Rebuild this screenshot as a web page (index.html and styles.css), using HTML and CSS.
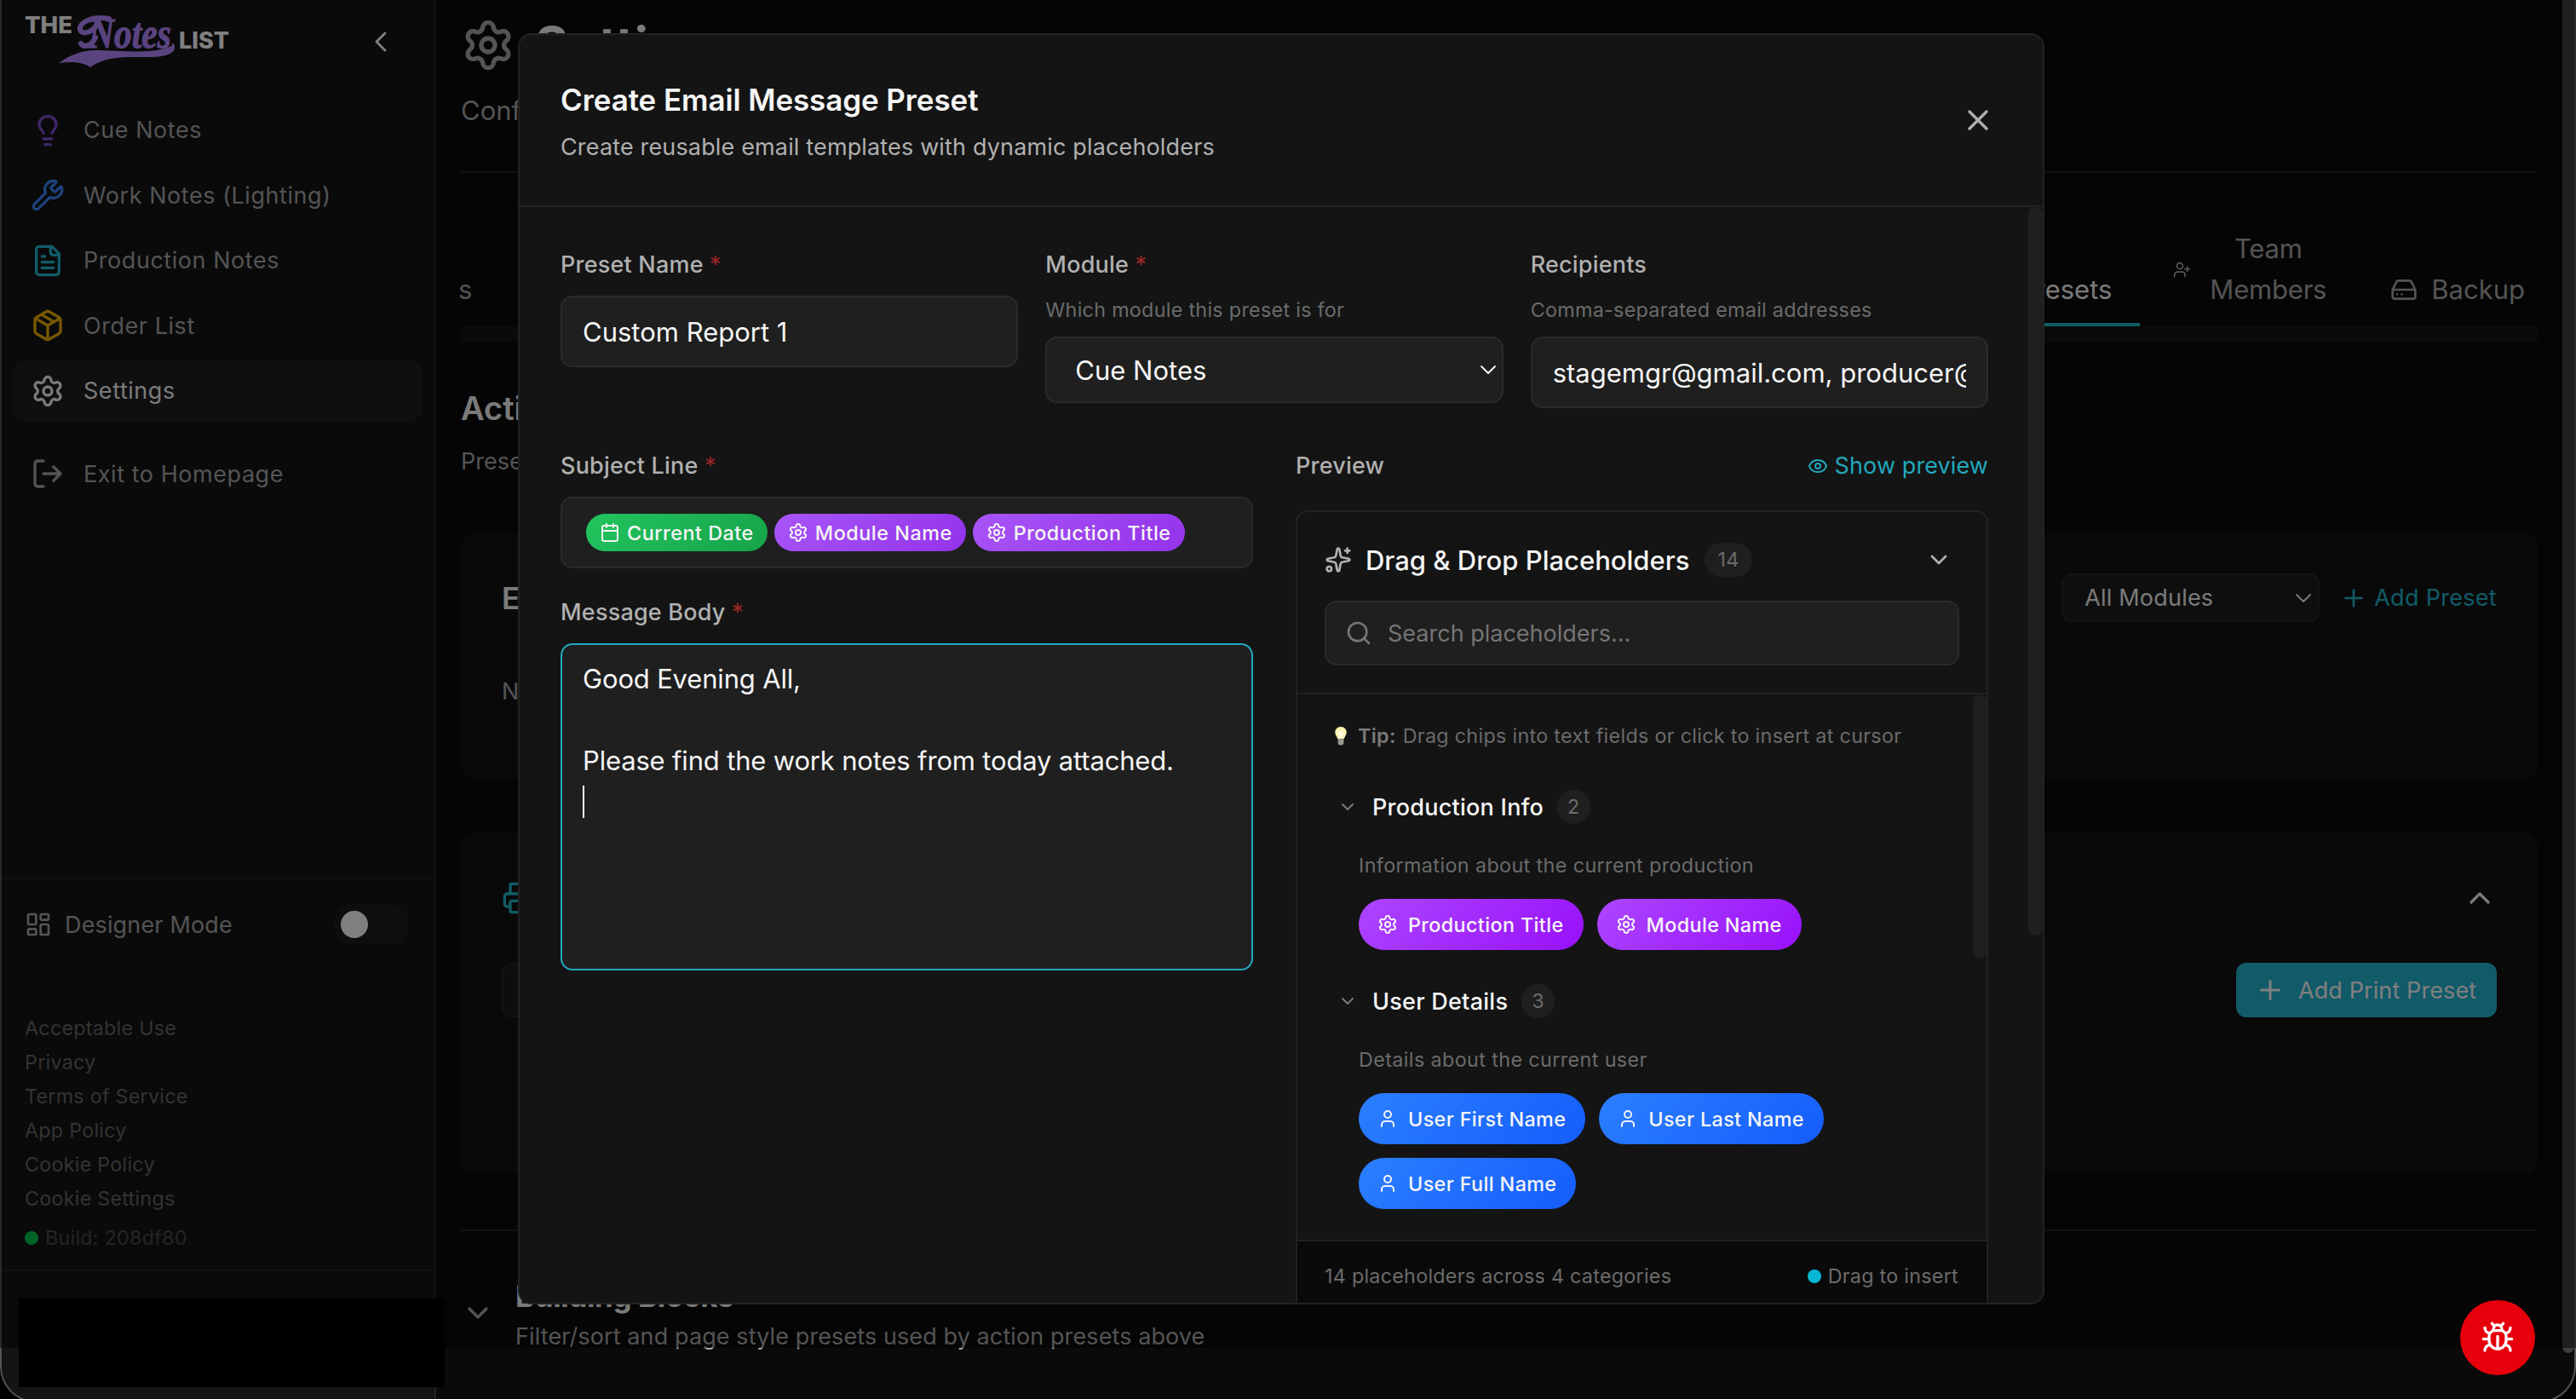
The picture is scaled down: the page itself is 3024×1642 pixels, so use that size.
FILE: index.html
```html
<!DOCTYPE html>
<html lang="en">

<head>
    <meta charset="UTF-8">
    <meta name="viewport" content="width=device-width, initial-scale=1.0">
    <title>The Notes List - Settings</title>
    <link rel="stylesheet" href="styles.css">
</head>

<body>
    <!-- Shared icons -->
    <svg width="0" height="0" class="sprite">
        <symbol id="i-gear" viewBox="0 0 24 24"><path d="M9.671 4.136a2.34 2.34 0 0 1 4.659 0 2.34 2.34 0 0 0 3.319 1.915 2.34 2.34 0 0 1 2.33 4.033 2.34 2.34 0 0 0 0 3.831 2.34 2.34 0 0 1-2.33 4.033 2.34 2.34 0 0 0-3.319 1.915 2.34 2.34 0 0 1-4.659 0 2.34 2.34 0 0 0-3.32-1.915 2.34 2.34 0 0 1-2.33-4.033 2.34 2.34 0 0 0 0-3.831A2.34 2.34 0 0 1 6.35 6.051a2.34 2.34 0 0 0 3.319-1.915"/><circle cx="12" cy="12" r="3"/></symbol>
        <symbol id="i-down" viewBox="0 0 24 24"><path d="m6 9 6 6 6-6"/></symbol>
        <symbol id="i-up" viewBox="0 0 24 24"><path d="m18 15-6-6-6 6"/></symbol>
        <symbol id="i-plus" viewBox="0 0 24 24"><path d="M5 12h14M12 5v14"/></symbol>
        <symbol id="i-user" viewBox="0 0 24 24"><path d="M19 21v-2a4 4 0 0 0-4-4H9a4 4 0 0 0-4 4v2"/><circle cx="12" cy="7" r="4"/></symbol>
    </svg>

    <div class="window">
        <aside class="sidebar">
            <div class="sidebar-head">
                <svg class="logo" viewBox="0 0 250 70">
                    <text x="1" y="28.7" class="logo-word" textLength="56" lengthAdjust="spacingAndGlyphs">THE</text>
                    <text x="182" y="46.7" class="logo-word" textLength="59" lengthAdjust="spacingAndGlyphs">LIST</text>
                    <text x="76" y="45.5" class="logo-script" textLength="97" lengthAdjust="spacingAndGlyphs">Notes</text>
                    <path d="M100 12C80 8 64 17 66 25c2 6 13 4 19-5" class="logo-curl"/>
                    <path d="M84 34c-4 9-13 13-17 7" class="logo-curl"/>
                    <path d="M41 64C54 55 66 49 86 49c26 0 58 5 82-3 6-2 7-3 6-6 5 3 4 9-1 12-9 6-26 5-46 5-20 0-35 2-49 12-8-6-21-7-37-5z" class="logo-swoosh"/>
                </svg>
                <svg class="icon collapse" viewBox="0 0 24 24"><path d="m15 18-6-6 6-6"/></svg>
            </div>
            <nav class="nav">
                <a class="nav-item"><svg class="icon c-purple" viewBox="0 0 24 24"><path d="M15 14c.2-1 .7-1.7 1.5-2.5 1-.9 1.5-2.2 1.5-3.5A6 6 0 0 0 6 8c0 1 .2 2.2 1.5 3.5.7.7 1.3 1.5 1.5 2.5M9 18h6M10 22h4"/></svg>Cue Notes</a>
                <a class="nav-item"><svg class="icon c-blue" viewBox="0 0 24 24"><path d="M14.7 6.3a1 1 0 0 0 0 1.4l1.6 1.6a1 1 0 0 0 1.4 0l3.106-3.105c.32-.322.863-.22.983.218a6 6 0 0 1-8.259 7.057l-7.91 7.91a1 1 0 0 1-2.999-3l7.91-7.91a6 6 0 0 1 7.057-8.259c.438.12.54.662.219.984z"/></svg>Work Notes (Lighting)</a>
                <a class="nav-item"><svg class="icon c-cyan" viewBox="0 0 24 24"><path d="M15 2H6a2 2 0 0 0-2 2v16a2 2 0 0 0 2 2h12a2 2 0 0 0 2-2V7ZM14 2v4a2 2 0 0 0 2 2h4M10 9H8M16 13H8M16 17H8"/></svg>Production Notes</a>
                <a class="nav-item"><svg class="icon c-yellow" viewBox="0 0 24 24"><path d="M11 21.73a2 2 0 0 0 2 0l7-4A2 2 0 0 0 21 16V8a2 2 0 0 0-1-1.73l-7-4a2 2 0 0 0-2 0l-7 4A2 2 0 0 0 3 8v8a2 2 0 0 0 1 1.73zM12 22V12M3.3 7 12 12l8.700-5M7.5 4.270l9 5.150"/></svg>Order List</a>
                <a class="nav-item active"><svg class="icon"><use href="#i-gear"/></svg>Settings</a>
                <div class="nav-divider"></div>
                <a class="nav-item"><svg class="icon" viewBox="0 0 24 24"><path d="M9 21H5a2 2 0 0 1-2-2V5a2 2 0 0 1 2-2h4M16 17l5-5-5-5M21 12H9"/></svg>Exit to Homepage</a>
            </nav>
            <div class="designer">
                <svg class="icon icon-32" viewBox="0 0 24 24"><rect width="7" height="9" x="3" y="3" rx="1"/><rect width="7" height="5" x="14" y="3" rx="1"/><rect width="7" height="9" x="14" y="12" rx="1"/><rect width="7" height="5" x="3" y="16" rx="1"/></svg>
                <span>Designer Mode</span>
                <span class="toggle"><i></i></span>
            </div>
            <div class="links">
                <a>Acceptable Use</a>
                <a>Privacy</a>
                <a>Terms of Service</a>
                <a>App Policy</a>
                <a>Cookie Policy</a>
                <a>Cookie Settings</a>
                <div class="build"><i></i>Build: 208df80</div>
            </div>
            <div class="account"></div>
        </aside>

        <main class="main">
            <div class="page-title"><svg class="icon icon-64"><use href="#i-gear"/></svg><h1>Settings</h1></div>
            <p class="page-sub">Configure</p>
            <div class="tabs">
                <div class="tab tab-first">s</div>
                <div class="tab tab-active">Presets</div>
                <div class="tab tab-team">
                    <svg class="icon icon-21" viewBox="0 0 24 24"><path d="M16 21v-2a4 4 0 0 0-4-4H6a4 4 0 0 0-4 4v2M19 8v6M22 11h-6"/><circle cx="9" cy="7" r="4"/></svg>
                    <span>Team<br>Members</span>
                </div>
                <div class="tab tab-backup">
                    <svg class="icon icon-32" viewBox="0 0 24 24"><path d="M22 12H2M5.450 5.110 2 12v6a2 2 0 0 0 2 2h16a2 2 0 0 0 2-2v-6l-3.450-6.890A2 2 0 0 0 16.760 4H7.240a2 2 0 0 0-1.790 1.110zM6 16h.01M10 16h.01"/></svg>
                    Backup
                </div>
            </div>
            <div class="tabs-scroll"></div>

            <h2 class="section-title">Action Presets</h2>
            <p class="section-sub">Presets</p>

            <section class="card card-email">
                <div class="card-row">
                    <h3>Email</h3>
                    <div class="module-select">All Modules <svg class="icon icon-32 thin"><use href="#i-down"/></svg></div>
                    <a class="add-link"><svg class="icon icon-32"><use href="#i-plus"/></svg>Add Preset</a>
                </div>
                <p>No presets</p>
            </section>

            <section class="card card-print">
                <div class="card-row">
                    <svg class="icon c-cyan" viewBox="0 0 24 24"><path d="M6 18H4a2 2 0 0 1-2-2v-5a2 2 0 0 1 2-2h16a2 2 0 0 1 2 2v5a2 2 0 0 1-2 2h-2M6 9V3a1 1 0 0 1 1-1h10a1 1 0 0 1 1 1v6"/><rect x="6" y="14" width="12" height="8" rx="1"/></svg>
                    <svg class="icon fold"><use href="#i-up"/></svg>
                </div>
                <div class="card-row">
                    <div class="filter-box"></div>
                    <button class="btn"><svg class="icon icon-36"><use href="#i-plus"/></svg>Add Print Preset</button>
                </div>
            </section>

            <section class="blocks">
                <svg class="icon"><use href="#i-down"/></svg>
                <div>
                    <h3>Building Blocks</h3>
                    <p>Filter/sort and page style presets used by action presets above</p>
                </div>
            </section>
        </main>
        <div class="page-scroll"></div>
    </div>

    <div class="overlay"></div>
    <div class="redacted"></div>

    <div class="modal">
        <div class="modal-head">
            <div>
                <h2>Create Email Message Preset</h2>
                <p>Create reusable email templates with dynamic placeholders</p>
            </div>
            <svg class="icon" viewBox="0 0 24 24"><path d="M18 6 6 18M6 6l12 12"/></svg>
        </div>
        <div class="modal-body">
            <div class="fields">
                <div>
                    <div class="label">Preset Name <b>*</b></div>
                    <div class="input">Custom Report 1</div>
                </div>
                <div>
                    <div class="label">Module <b>*</b></div>
                    <div class="help">Which module this preset is for</div>
                    <div class="input select">Cue Notes <svg class="icon icon-32 thin"><use href="#i-down"/></svg></div>
                </div>
                <div>
                    <div class="label">Recipients</div>
                    <div class="help">Comma-separated email addresses</div>
                    <div class="input"><span class="clip">stagemgr@gmail.com, producer@</span></div>
                </div>
            </div>
            <div class="columns">
                <div>
                    <div class="label">Subject Line <b>*</b></div>
                    <div class="input subject">
                        <span class="tag green"><svg class="icon" viewBox="0 0 24 24"><path d="M8 2v4M16 2v4M3 10h18"/><rect width="18" height="18" x="3" y="4" rx="2"/></svg>Current Date</span>
                        <span class="tag purple"><svg class="icon"><use href="#i-gear"/></svg>Module Name</span>
                        <span class="tag purple"><svg class="icon"><use href="#i-gear"/></svg>Production Title</span>
                    </div>
                    <div class="label label-body">Message Body <b>*</b></div>
                    <div class="textarea">Good Evening All,<br><br>Please find the work notes from today attached.<br><i class="caret"></i></div>
                </div>
                <div>
                    <div class="label preview-label">Preview
                        <a><svg class="icon icon-24" viewBox="0 0 24 24"><path d="M2.062 12.348a1 1 0 0 1 0-.696 10.750 10.750 0 0 1 19.876 0 1 1 0 0 1 0 .696 10.750 10.750 0 0 1-19.876 0"/><circle cx="12" cy="12" r="3"/></svg>Show preview</a>
                    </div>
                    <div class="panel">
                        <div class="panel-head">
                            <div class="panel-title">
                                <svg class="icon icon-32" viewBox="0 0 24 24"><path d="M11.017 2.814a1 1 0 0 1 1.966 0l1.051 5.558a2 2 0 0 0 1.594 1.594l5.558 1.051a1 1 0 0 1 0 1.966l-5.558 1.051a2 2 0 0 0-1.594 1.594l-1.051 5.558a1 1 0 0 1-1.966 0l-1.051-5.558a2 2 0 0 0-1.594-1.594l-5.558-1.051a1 1 0 0 1 0-1.966l5.558-1.051a2 2 0 0 0 1.594-1.594zM20 2v4M22 4h-4"/><circle cx="4" cy="20" r="2"/></svg>
                                <h3>Drag &amp; Drop Placeholders</h3>
                                <span class="count">14</span>
                                <svg class="icon icon-32 toggle-arrow"><use href="#i-down"/></svg>
                            </div>
                            <div class="search">
                                <svg class="icon icon-32" viewBox="0 0 24 24"><circle cx="11" cy="11" r="8"/><path d="m21 21-4.340-4.340"/></svg>
                                Search placeholders...
                            </div>
                        </div>
                        <div class="panel-list">
                            <div class="list-scroll"></div>
                            <div class="tip">
                                <svg class="bulb" viewBox="0 0 16 24"><path d="M8 1C3.800 1 1 4 1 8c0 3 2.400 4.500 3 8h8c.6-3.500 3-5 3-8 0-4-2.800-7-7-7z" fill="#fdf0b0"/><path d="M5 7.500C6 6 10 6 11 7.500L9.500 15h-3z" fill="#fffbe6"/><path d="M4.500 16h7v5c0 1.500-1.500 2.500-3.500 2.500S4.500 22.500 4.500 21z" fill="#9a9a94"/></svg>
                                <b>Tip:</b> Drag chips into text fields or click to insert at cursor
                            </div>
                            <div class="group-title"><svg class="icon icon-24"><use href="#i-down"/></svg>Production Info<span class="count">2</span></div>
                            <p>Information about the current production</p>
                            <div class="chips">
                                <span class="chip purple"><svg class="icon icon-24"><use href="#i-gear"/></svg>Production Title</span>
                                <span class="chip purple"><svg class="icon icon-24"><use href="#i-gear"/></svg>Module Name</span>
                            </div>
                            <div class="group-title"><svg class="icon icon-24"><use href="#i-down"/></svg>User Details<span class="count">3</span></div>
                            <p>Details about the current user</p>
                            <div class="chips">
                                <span class="chip blue"><svg class="icon icon-24"><use href="#i-user"/></svg>User First Name</span>
                                <span class="chip blue"><svg class="icon icon-24"><use href="#i-user"/></svg>User Last Name</span>
                                <span class="chip blue"><svg class="icon icon-24"><use href="#i-user"/></svg>User Full Name</span>
                            </div>
                        </div>
                        <div class="panel-foot">
                            <span>14 placeholders across 4 categories</span>
                            <span class="drag"><i></i>Drag to insert</span>
                        </div>
                    </div>
                </div>
            </div>
        </div>
        <div class="modal-scroll"></div>
    </div>

    <button class="bug">
        <svg class="icon" viewBox="0 0 24 24"><path d="M12 20v-9M14 7a4 4 0 0 1 4 4v3a6 6 0 0 1-12 0v-3a4 4 0 0 1 4-4zM14.120 3.880 16 2M21 21a4 4 0 0 0-3.810-4M21 5a4 4 0 0 1-3.550 3.970M22 13h-4M3 21a4 4 0 0 1 3.810-4M3 5a4 4 0 0 0 3.550 3.970M6 13H2M8 2l1.880 1.880M9 7.130V6a3 3 0 1 1 6 0v1.130"/></svg>
    </button>
</body>

</html>
```
FILE: styles.css
```css
* {
    box-sizing: border-box;
    margin: 0;
    padding: 0;
}

html {
    height: 1642px;
    overflow: hidden;
    background: #000;
}

body {
    position: relative;
    width: 3024px;
    height: 1642px;
    overflow: hidden;
    background: #000;
    color: #f5f5f5;
    font-family: Inter, "Liberation Sans", sans-serif;
    font-size: 27px;
}

h1, h2, h3 {
    font-weight: 600;
}

.sprite {
    position: absolute;
}

.icon {
    width: 40px;
    height: 40px;
    flex: none;
    fill: none;
    stroke: currentColor;
    stroke-width: 2;
    stroke-linecap: round;
    stroke-linejoin: round;
}

.icon-64 { width: 64px; height: 64px; }
.icon-36 { width: 36px; height: 36px; }
.icon-32 { width: 32px; height: 32px; }
.icon-24 { width: 24px; height: 24px; }
.icon-21 { width: 21px; height: 21px; }
.thin { stroke-width: 1.5; }

.c-purple { color: #7c4fd0; }
.c-blue { color: #3b82f6; }
.c-cyan { color: #22b8cf; }
.c-yellow { color: #f0b100; }

/* App window */
.window {
    display: flex;
    width: 3024px;
    height: 1646px;
    border: 2px solid #555;
    border-top: none;
    border-radius: 0 0 42px 42px;
    background: #0a0a0a;
    overflow: hidden;
}

.sidebar {
    display: flex;
    flex-direction: column;
    width: 510px;
    flex: none;
    background: #141414;
    border-right: 2px solid #242424;
    color: #a8a8a8;
    letter-spacing: 0.550px;
}

.sidebar-head {
    display: flex;
    align-items: center;
    justify-content: space-between;
    height: 98px;
    padding: 0 43px 0 26px;
}

.logo {
    width: 250px;
    height: 70px;
    margin-bottom: 8px;
}

.logo-word {
    fill: #fff;
    font-size: 26.500px;
    font-weight: 800;
    letter-spacing: 0;
}

.logo-script {
    fill: #b488ff;
    stroke: #b488ff;
    stroke-width: 1;
    font-family: "Liberation Serif", serif;
    font-size: 50px;
    font-style: italic;
    font-weight: 700;
    letter-spacing: 0;
}

.logo-swoosh {
    fill: #b488ff;
}

.logo-curl {
    fill: none;
    stroke: #b488ff;
    stroke-width: 6;
    stroke-linecap: round;
}

.collapse {
    color: #fff;
    stroke-width: 1.700;
}

.nav {
    display: flex;
    flex-direction: column;
    gap: 4.600px;
    height: 932px;
    padding: 18.500px 14px 0 12px;
}

.nav-item {
    display: flex;
    align-items: center;
    gap: 22px;
    height: 72px;
    flex: none;
    padding-left: 22px;
    border-radius: 16px;
}

.nav-item.active {
    background: #1f1f1f;
    color: #f5f5f5;
}

.nav-divider {
    height: 2px;
    margin: 12px 0 2px;
    background: #1a1a1a;
}

.designer {
    display: flex;
    align-items: center;
    gap: 15px;
    height: 108px;
    border-top: 2px solid #222;
    padding: 0 30px 0 27px;
    letter-spacing: 0.150px;
}

.toggle {
    width: 88px;
    height: 48px;
    margin-left: auto;
    padding: 8px;
    border-radius: 24px;
    background: #1d1d1d;
}

.toggle i {
    display: block;
    width: 32px;
    height: 32px;
    border-radius: 50%;
    background: #fff;
}

.links {
    height: 352px;
    padding: 49px 0 0 27px;
    color: #666;
    font-size: 23.300px;
    letter-spacing: 0.250px;
    line-height: 40px;
}

.links a {
    display: block;
}

.build {
    display: flex;
    align-items: center;
    gap: 8px;
    margin-top: 6px;
    color: #4a4a4a;
}

.build i {
    width: 16px;
    height: 16px;
    border-radius: 50%;
    background: #00c950;
}

.account {
    flex: 1;
    border-top: 2px solid #222;
}

/* Settings page behind the dialog */
.main {
    display: flex;
    flex-direction: column;
    width: 2496px;
    flex: none;
    padding: 21px 29px 0 29px;
    color: #a8a8a8;
}

.page-title {
    display: flex;
    align-items: center;
    gap: 23px;
    height: 64px;
}

.page-title h1 {
    color: #f5f5f5;
    font-size: 60px;
    font-weight: 700;
}

.page-sub {
    height: 118px;
    padding-top: 21px;
    border-bottom: 2px solid #222;
    font-size: 31px;
    line-height: 48px;
}

.tabs {
    display: flex;
    align-items: flex-end;
    height: 180px;
    font-size: 31px;
    line-height: 48px;
}

.tab {
    display: flex;
    align-items: center;
    padding-bottom: 19px;
}

.tab-first {
    margin-left: -3px;
    margin-right: auto;
}

.tab-active {
    padding: 0 33px 15px;
    border-bottom: 4px solid #22b8cf;
    color: #f5f5f5;
}

.tab-team {
    gap: 22px;
    margin-left: 39px;
    text-align: center;
    letter-spacing: -0.200px;
}

.tab-backup {
    gap: 16px;
    margin: 0 15px 0 75px;
}

.tabs-scroll {
    height: 18px;
    background: #151515;
}

.section-title {
    height: 47px;
    margin-top: 55px;
    color: #f5f5f5;
    font-size: 38px;
    line-height: 47px;
}

.section-sub {
    height: 40px;
    margin-top: 18px;
    line-height: 42px;
}

.card {
    padding: 0 48px;
    border-radius: 16px;
    background: #131313;
}

.card-row {
    display: flex;
    align-items: center;
}

.card h3 {
    margin-right: auto;
    color: #f5f5f5;
    font-size: 35px;
}

.card-email {
    height: 288px;
    margin-top: 65px;
    padding-top: 47px;
}

.card-email p {
    margin-top: 65px;
}

.module-select {
    display: flex;
    align-items: center;
    justify-content: space-between;
    width: 303px;
    height: 57px;
    margin-right: 24px;
    padding: 0 1px 0 25px;
    border: 2px solid #262626;
    border-radius: 12px;
    background: #1d1d1d;
    color: #f5f5f5;
    letter-spacing: 0.200px;
}

.module-select .icon {
    width: 32px;
}

.add-link {
    display: flex;
    align-items: center;
    gap: 8px;
    color: #22b8cf;
    letter-spacing: 0.300px;
}

.card-print {
    height: 401px;
    margin-top: 63px;
    padding-top: 57px;
}

.fold {
    margin-left: auto;
    color: #f5f5f5;
}

.card-print .card-row + .card-row {
    justify-content: space-between;
    margin-top: 56px;
}

.filter-box {
    width: 300px;
    height: 64px;
    border: 2px solid #262626;
    border-radius: 12px;
    background: #1a1a1a;
}

.btn {
    display: flex;
    align-items: center;
    gap: 15px;
    width: 306px;
    height: 64px;
    padding-left: 22px;
    border: none;
    border-radius: 12px;
    background: #22b4d0;
    color: #fff;
    font: 27px Inter, sans-serif;
    letter-spacing: 0.100px;
}

.blocks {
    display: flex;
    gap: 24px;
    margin-top: 65px;
    padding-top: 52px;
    border-top: 2px solid #222;
}

.blocks .icon {
    margin-top: 24px;
}

.blocks h3 {
    color: #f5f5f5;
    font-size: 35px;
    font-weight: 700;
    line-height: 48px;
    letter-spacing: -0.400px;
}

.blocks p {
    line-height: 48px;
    letter-spacing: 0.100px;
}

.page-scroll {
    width: 14px;
    height: 1588px;
    background: #3e3e3e;
    border-radius: 0 0 8px 8px;
}

.overlay {
    position: absolute;
    top: 0;
    left: 0;
    width: 3024px;
    height: 1582px;
    background: rgba(0, 0, 0, 0.5);
}

.redacted {
    position: absolute;
    top: 1524px;
    left: 22px;
    width: 500px;
    height: 104px;
    background: #000;
}

/* Dialog */
.modal {
    position: absolute;
    top: 39px;
    left: 608px;
    width: 1792px;
    height: 1492px;
    border: 2px solid #222;
    border-radius: 16px;
    background: #141414;
    overflow: hidden;
}

.modal-head {
    display: flex;
    align-items: center;
    justify-content: space-between;
    height: 202px;
    padding: 0 56px 0 48px;
    border-bottom: 2px solid #222;
    color: #b0b0b0;
}

.modal-head h2 {
    margin-top: 8px;
    color: #f5f5f5;
    font-size: 35px;
    line-height: 56px;
    letter-spacing: -0.100px;
}

.modal-head p {
    line-height: 56px;
    letter-spacing: 0.150px;
}

.modal-body {
    width: 1772px;
    padding: 48px 48px 0;
}

.modal-scroll {
    position: absolute;
    top: 202px;
    right: 0;
    width: 17px;
    height: 855px;
    border-radius: 8px;
    background: #1f1f1f;
}

.fields {
    display: grid;
    grid-template-columns: repeat(3, minmax(0, 1fr));
    gap: 32px;
    height: 188px;
    margin-bottom: 48px;
}

.columns {
    display: grid;
    grid-template-columns: 813px 813px;
    justify-content: space-between;
}

.label {
    height: 40px;
    margin-bottom: 16px;
    color: #b0b0b0;
    font-weight: 500;
    line-height: 40px;
    letter-spacing: 0.200px;
}

.label b {
    color: #9b2626;
    font-weight: 400;
}

.help {
    height: 34px;
    margin-bottom: 14px;
    color: #6b6b6b;
    font-size: 23.300px;
    line-height: 34px;
    letter-spacing: 0.300px;
}

.input {
    display: flex;
    align-items: center;
    height: 84px;
    padding: 0 24px;
    border: 2px solid #2a2a2a;
    border-radius: 14px;
    background: #1f1f1f;
    font-size: 31px;
    white-space: nowrap;
}

.clip {
    overflow: hidden;
}

.select {
    justify-content: space-between;
    height: 78px;
    padding: 0 0 0 33px;
}

.subject {
    gap: 8px;
    padding-left: 28px;
}

.tag {
    display: flex;
    align-items: center;
    gap: 8px;
    height: 44px;
    padding: 0 16px;
    border-radius: 22px;
    font-size: 23.300px;
    font-weight: 500;
    letter-spacing: 0.550px;
}

.tag .icon {
    width: 24px;
    height: 24px;
}

.tag.green { background: linear-gradient(135deg, #22c55e, #16a34a); }
.tag.purple { background: linear-gradient(135deg, #a855f7, #9333ea); }

.label-body {
    margin: 32px 0 16px;
}

.textarea {
    height: 384px;
    padding: 16px 24px;
    border: 2px solid #22a8bd;
    border-radius: 14px;
    background: #1f1f1f;
    font-size: 31px;
    line-height: 48px;
    letter-spacing: -0.170px;
}

.caret {
    display: block;
    width: 2px;
    height: 38px;
    margin-top: 5px;
    background: #fff;
}

.preview-label {
    display: flex;
    justify-content: space-between;
    margin-bottom: 32px;
}

.preview-label a {
    display: flex;
    align-items: center;
    gap: 8px;
    color: #22a8bd;
    font-weight: 400;
    letter-spacing: 0.100px;
}

.panel {
    height: 960px;
    border: 2px solid #222;
    border-radius: 14px;
}

.panel-head {
    height: 214px;
    padding: 36px 32px 0;
    border-bottom: 2px solid #222;
}

.panel-title {
    display: flex;
    align-items: center;
    height: 40px;
    color: #b0b0b0;
}

.panel-title h3 {
    margin: 0 18px 0 16px;
    color: #f5f5f5;
    font-size: 31px;
    font-weight: 500;
}

.toggle-arrow {
    margin: 0 8px 0 auto;
}

.count {
    height: 40px;
    padding: 0 12px;
    border-radius: 20px;
    background: #1f1f1f;
    color: #6b6b6b;
    font-size: 23.300px;
    font-weight: 400;
    line-height: 40px;
    letter-spacing: 0.300px;
}

.panel-title .count {
    padding: 0 15px;
}

.search {
    display: flex;
    align-items: center;
    gap: 18px;
    height: 76px;
    margin-top: 28px;
    padding-left: 22px;
    border: 2px solid #2a2a2a;
    border-radius: 14px;
    background: #1f1f1f;
    color: #757575;
}

.panel-list {
    position: relative;
    height: 640px;
    padding: 27px 0 0 40px;
}

.list-scroll {
    position: absolute;
    top: 0;
    right: 0;
    width: 16px;
    height: 310px;
    border-radius: 8px;
    background: #1f1f1f;
}

.tip {
    display: flex;
    align-items: center;
    gap: 8px;
    height: 42px;
    color: #6b6b6b;
    font-size: 23.300px;
    letter-spacing: 0.310px;
}

.tip b {
    color: #7a7a7a;
    font-weight: 600;
}

.bulb {
    width: 16px;
    height: 23px;
    margin: 0 4px 0 3px;
}

.group-title {
    display: flex;
    align-items: center;
    height: 40px;
    margin-top: 43px;
    padding-left: 7px;
    font-weight: 500;
    letter-spacing: 0.250px;
}

.chips + .group-title {
    margin-top: 40px;
}

.group-title .icon {
    margin-right: 17px;
    color: #7a7a7a;
}

.group-title .count {
    margin-left: 16px;
}

.panel-list p {
    height: 40px;
    margin: 29px 0 19px 32px;
    color: #6b6b6b;
    font-size: 23.300px;
    line-height: 40px;
    letter-spacing: 0.400px;
}

.chips {
    display: flex;
    flex-wrap: wrap;
    gap: 16px;
    width: 620px;
    margin-left: 32px;
}

.chip {
    display: flex;
    align-items: center;
    gap: 12px;
    height: 60px;
    padding: 0 23px 0 22px;
    border-radius: 30px;
    font-size: 23.300px;
    font-weight: 500;
    letter-spacing: 0.400px;
}

.chip.purple { background: linear-gradient(135deg, #ad46ff, #9810fa); }
.chip.blue { background: linear-gradient(135deg, #2b7fff, #155dfc); }

.panel-foot {
    display: flex;
    justify-content: space-between;
    height: 103px;
    padding: 20px 33px 0 32px;
    border-top: 2px solid #222;
    background: #0a0a0a;
    color: #6b6b6b;
    font-size: 23.300px;
    line-height: 42px;
    letter-spacing: 0.270px;
}

.drag {
    display: flex;
    align-items: center;
    gap: 8px;
    height: 42px;
}

.drag i {
    width: 16px;
    height: 16px;
    border-radius: 50%;
    background: #06b6d4;
}

.bug {
    position: absolute;
    top: 1526px;
    left: 2888px;
    display: flex;
    align-items: center;
    justify-content: center;
    width: 88px;
    height: 88px;
    border: none;
    border-radius: 50%;
    background: #e7000b;
    color: #fff;
}
```
